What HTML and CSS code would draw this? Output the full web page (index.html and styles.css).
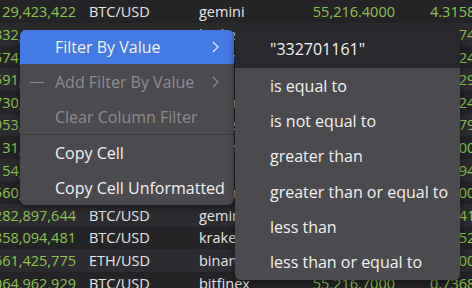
FILE: index.html
```html
<!DOCTYPE html>
<html>
<head>
<meta charset="utf-8">
<link rel="stylesheet" href="styles.css">
</head>
<body>
<div class="grid">
  <div class="row dark"><div class="c1 num">29,423,422</div><div class="c2">BTC/USD</div><div class="c3">gemini</div><div class="c4 num">55,216.4000</div><div class="c5 num">4.3158</div></div>
  <div class="row light"><div class="c1 num">332,701,161</div><div class="c2">ETH/USD</div><div class="c3">kraken</div><div class="c4 num">3,412.1800</div><div class="c5 num">1.2174</div></div>
  <div class="row dark"><div class="c1 num">1,574,220,318</div><div class="c2">BTC/USD</div><div class="c3">binance</div><div class="c4 num">55,214.9000</div><div class="c5 num">0.5524</div></div>
  <div class="row light"><div class="c1 num">1,591,046,275</div><div class="c2">BTC/USD</div><div class="c3">bitfinex</div><div class="c4 num">55,215.2000</div><div class="c5 num">2.0129</div></div>
  <div class="row dark"><div class="c1 num">1,730,518,802</div><div class="c2">ETH/USD</div><div class="c3">gemini</div><div class="c4 num">3,411.9500</div><div class="c5 num">0.8824</div></div>
  <div class="row light"><div class="c1 num">1,953,377,140</div><div class="c2">BTC/USD</div><div class="c3">kraken</div><div class="c4 num">55,216.1000</div><div class="c5 num">3.1679</div></div>
  <div class="row dark"><div class="c1 num">31,884,610</div><div class="c2">BTC/USD</div><div class="c3">binance</div><div class="c4 num">55,216.0000</div><div class="c5 num">1.5000</div></div>
  <div class="row light"><div class="c1 num">54,209,733</div><div class="c2">ETH/USD</div><div class="c3">bitfinex</div><div class="c4 num">3,412.0200</div><div class="c5 num">0.4394</div></div>
  <div class="row dark"><div class="c1 num">1,560,413,908</div><div class="c2">BTC/USD</div><div class="c3">gemini</div><div class="c4 num">55,216.3000</div><div class="c5 num">2.2500</div></div>
  <div class="row light"><div class="c1 num">1,282,897,644</div><div class="c2">BTC/USD</div><div class="c3">gemini</div><div class="c4 num">55,216.5000</div><div class="c5 num">0.9841</div></div>
  <div class="row dark"><div class="c1 num">1,858,094,481</div><div class="c2">BTC/USD</div><div class="c3">kraken</div><div class="c4 num">55,216.6000</div><div class="c5 num">1.0352</div></div>
  <div class="row light"><div class="c1 num">1,661,425,775</div><div class="c2">ETH/USD</div><div class="c3">binance</div><div class="c4 num">3,412.2500</div><div class="c5 num">5.0000</div></div>
  <div class="row dark"><div class="c1 num">1,064,962,929</div><div class="c2">BTC/USD</div><div class="c3">bitfinex</div><div class="c4 num">55,216.7000</div><div class="c5 num">0.7368</div></div>
</div>

<div class="menu main">
  <div class="item active"><span class="label">Filter By Value</span><svg class="chev" width="7" height="12" viewBox="0 0 7 12"><path d="M1 1 L6 6 L1 11" fill="none" stroke="currentColor" stroke-width="1.2"/></svg></div>
  <div class="item disabled"><span class="dash"></span><span class="label">Add Filter By Value</span><svg class="chev" width="7" height="12" viewBox="0 0 7 12"><path d="M1 1 L6 6 L1 11" fill="none" stroke="currentColor" stroke-width="1.2"/></svg></div>
  <div class="item disabled"><span class="label">Clear Column Filter</span></div>
  <div class="sep"></div>
  <div class="item"><span class="label">Copy Cell</span></div>
  <div class="item"><span class="label">Copy Cell Unformatted</span></div>
</div>

<div class="menu sub">
  <div class="item value"><span class="label">"332701161"</span></div>
  <div class="item"><span class="label">is equal to</span></div>
  <div class="item"><span class="label">is not equal to</span></div>
  <div class="item"><span class="label">greater than</span></div>
  <div class="item"><span class="label">greater than or equal to</span></div>
  <div class="item"><span class="label">less than</span></div>
  <div class="item"><span class="label">less than or equal to</span></div>
</div>
</body>
</html>
```
FILE: styles.css
```css
html, body {
  margin: 0;
  padding: 0;
  background: #262629;
}
body {
  width: 472px;
  height: 288px;
  overflow: hidden;
  position: relative;
  font-family: "Open Sans", "Noto Sans", sans-serif;
}
.grid {
  display: flex;
  flex-direction: column;
  padding-top: 0.7px;
}
.row {
  display: flex;
  align-items: center;
  height: 22.6px;
  font-size: 14.5px;
  color: #e6e6e6;
  white-space: nowrap;
}
.row.dark { background: #242427; }
.row.light { background: #2c2c30; }
.num { color: #8cc44e; }
.c1 {
  width: 76px;
  display: flex;
  justify-content: flex-end;
  overflow: hidden;
  flex: none;
}
.c2 { width: 110px; margin-left: 13px; flex: none; }
.c3 { width: 110px; flex: none; }
.c4 { width: 86px; flex: none; text-align: right; }
.c5 { margin-left: 35px; flex: none; }

.menu {
  position: absolute;
  background: #4b4a4e;
  border-radius: 6px;
  box-shadow: 0 2px 8px rgba(0,0,0,0.45);
  color: #f2f2f2;
  font-size: 16px;
  display: flex;
  flex-direction: column;
}
.main {
  left: 20px;
  top: 30px;
  width: 214px;
}
.sub {
  left: 235px;
  top: 30px;
  width: 225px;
  overflow: hidden;
}
.item {
  position: relative;
  display: flex;
  align-items: center;
  height: 35px;
  padding-left: 35px;
  white-space: nowrap;
}
.main .item:first-child { height: 34px; }
.item.active {
  background: #437ae4;
  border-radius: 6px 6px 0 0;
}
.item.disabled { color: #8e8d91; }
.chev {
  position: absolute;
  right: 15px;
  top: 50%;
  margin-top: -6px;
}
.item.active .chev { color: #e8eefc; }
.dash {
  position: absolute;
  left: 10px;
  top: 50%;
  width: 14px;
  height: 1px;
  background: #8e8d91;
}
.sep {
  height: 1px;
  background: #3a393d;
}
.sub .item { height: 35.3px; }
.sub .item.value {
  height: 38px;
  background: #2a292d;
}
```
